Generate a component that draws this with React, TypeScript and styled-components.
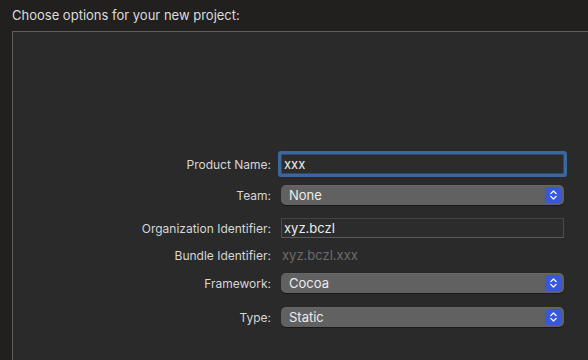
import React from "react";
import styled, { createGlobalStyle } from "styled-components";

const Global = createGlobalStyle`
  html, body { margin: 0; padding: 0; background: #21201f; overflow: hidden; }
  body { font-family: Inter, "Liberation Sans", "Noto Sans", sans-serif; -webkit-font-smoothing: antialiased; }
`;

const Page = styled.div`
  width: 588px;
  height: 360px;
  display: flex;
  flex-direction: column;
  overflow: hidden;
`;

const Title = styled.div`
  height: 31px;
  padding-left: 12px;
  display: flex;
  align-items: center;
  font-size: 13px;
  color: #dcdcdc;
  box-sizing: border-box;
  padding-bottom: 1px;
`;

const Panel = styled.div`
  margin-left: 12px;
  width: 600px;
  flex: 1;
  background: #2a2a2a;
  border-top: 1px solid #5e5e5e;
  border-left: 1px solid #5e5e5e;
  padding-top: 122px;
  box-sizing: border-box;
`;

const Row = styled.div<{ $gap: number }>`
  display: grid;
  grid-template-columns: 258px 283px;
  column-gap: 10px;
  height: 20px;
  align-items: center;
  margin-top: ${(p) => p.$gap}px;
`;

const Label = styled.div`
  text-align: right;
  font-size: 12px;
  color: #d6d6d6;
  white-space: nowrap;
`;

const Input = styled.div<{ $focused?: boolean }>`
  height: 20px;
  box-sizing: border-box;
  background: #2c2c2c;
  border: 1px solid ${(p) => (p.$focused ? "#2f4a6e" : "#4b4b4b")};
  border-top-color: ${(p) => (p.$focused ? "#2f4a6e" : "#444")};
  border-bottom-color: ${(p) => (p.$focused ? "#2f4a6e" : "#5a5a5a")};
  box-shadow: ${(p) => (p.$focused ? "0 0 0 3px #3c679c" : "none")};
  border-radius: ${(p) => (p.$focused ? "1px" : "0")};
  padding-left: 2px;
  display: flex;
  align-items: center;
  font-size: 13px;
  color: #ececec;
`;

const Static = styled.div`
  font-size: 13px;
  color: #6c6c6c;
  padding-left: 1px;
`;

const Popup = styled.div`
  height: 20px;
  box-sizing: border-box;
  background: #616161;
  border-radius: 5px;
  box-shadow: 0 0.5px 1px rgba(0, 0, 0, 0.45), inset 0 0.5px 0 rgba(255, 255, 255, 0.08);
  display: flex;
  align-items: center;
  justify-content: space-between;
  padding: 0 2px 0 8px;
  font-size: 13px;
  color: #ececec;
`;

const Stepper = styled.div`
  width: 17px;
  height: 16px;
  border-radius: 4px;
  background: #3757dd;
  display: flex;
  align-items: center;
  justify-content: center;
`;

const Chevrons = () => (
  <svg width="9" height="12" viewBox="0 0 9 12" fill="none">
    <path d="M1.8 4.6 L4.5 2 L7.2 4.6" stroke="#fff" strokeWidth="1.3" strokeLinecap="round" strokeLinejoin="round" />
    <path d="M1.8 7.4 L4.5 10 L7.2 7.4" stroke="#fff" strokeWidth="1.3" strokeLinecap="round" strokeLinejoin="round" />
  </svg>
);

const Select = ({ value }: { value: string }) => (
  <Popup>
    <span>{value}</span>
    <Stepper>
      <Chevrons />
    </Stepper>
  </Popup>
);

export default function App() {
  return (
    <Page>
      <Global />
      <Title>Choose options for your new project:</Title>
      <Panel>
        <Row $gap={0}>
          <Label>Product Name:</Label>
          <Input $focused>xxx</Input>
        </Row>
        <Row $gap={11}>
          <Label>Team:</Label>
          <Select value="None" />
        </Row>
        <Row $gap={13}>
          <Label>Organization Identifier:</Label>
          <Input>xyz.bczl</Input>
        </Row>
        <Row $gap={7}>
          <Label>Bundle Identifier:</Label>
          <Static>xyz.bczl.xxx</Static>
        </Row>
        <Row $gap={8}>
          <Label>Framework:</Label>
          <Select value="Cocoa" />
        </Row>
        <Row $gap={14}>
          <Label>Type:</Label>
          <Select value="Static" />
        </Row>
      </Panel>
    </Page>
  );
}
